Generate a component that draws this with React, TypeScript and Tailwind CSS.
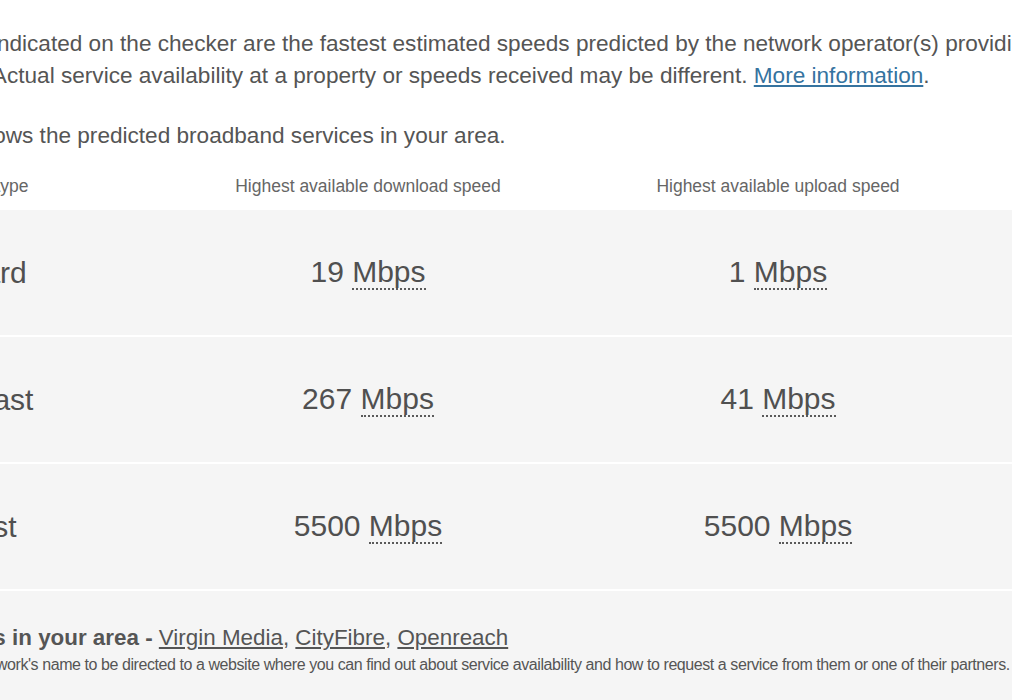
import React from 'react';

interface SpeedRow {
  type: string;
  download: string;
  upload: string;
}

const rows: SpeedRow[] = [
  { type: 'Standard', download: '19', upload: '1' },
  { type: 'Superfast', download: '267', upload: '41' },
  { type: 'Ultrafast', download: '5500', upload: '5500' },
];

const Speed: React.FC<{ value: string }> = ({ value }) => (
  <span className="text-[30px] leading-none text-[#505050]">
    {value}{' '}
    <abbr title="Megabits per second" className="no-underline border-b-2 border-dotted border-[#5a5a5a]">
      Mbps
    </abbr>
  </span>
);

const App: React.FC = () => {
  return (
    <div className="w-[1012px] h-[700px] overflow-hidden bg-white font-['Liberation_Sans',Arial,sans-serif]">
      <div className="-ml-[95px] w-[1120px]">
        <div className="pl-[4px] pt-[28px] text-[22.6px] leading-[32px] text-[#555555] whitespace-nowrap">
          <p>
            Speeds indicated on the checker are the fastest estimated speeds predicted by the network operator(s) providing
            <br />
            service. Actual service availability at a property or speeds received may be different.{' '}
            <a href="#" className="text-[#35739f] underline underline-offset-2">
              More information
            </a>
            .
          </p>
          <p className="mt-[28px]">Table shows the predicted broadband services in your area.</p>
        </div>

        <div className="grid grid-cols-[258px_410px_410px] h-[48px] mt-[10px] items-center text-[17.5px] text-[#666666]">
          <div>Broadband type</div>
          <div className="text-center">Highest available download speed</div>
          <div className="text-center">Highest available upload speed</div>
        </div>

        {rows.map((row) => (
          <div
            key={row.type}
            className="grid grid-cols-[258px_410px_410px] h-[127px] items-center bg-[#f5f5f5] border-b-2 border-white"
          >
            <div className="text-[30px] text-[#505050]">{row.type}</div>
            <div className="text-center">
              <Speed value={row.download} />
            </div>
            <div className="text-center">
              <Speed value={row.upload} />
            </div>
          </div>
        ))}

        <div className="bg-[#f5f5f5] h-[120px] pt-[34px] whitespace-nowrap text-[#555555]">
          <p className="text-[22.4px] leading-[26px]">
            <span className="font-bold">Networks in your area - </span>
            <a href="#" className="underline underline-offset-2">Virgin Media</a>,{' '}
            <a href="#" className="underline underline-offset-2">CityFibre</a>,{' '}
            <a href="#" className="underline underline-offset-2">Openreach</a>
          </p>
          <p className="text-[16px] leading-[20px] mt-[4px] tracking-[-0.43px]">
            Click on a network's name to be directed to a website where you can find out about service availability and how to request a service from them or one of their partners.
          </p>
        </div>
      </div>
    </div>
  );
};

export default App;
